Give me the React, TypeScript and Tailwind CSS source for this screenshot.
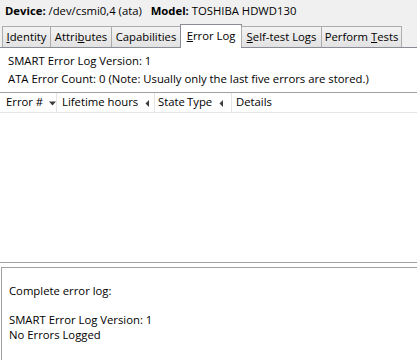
import React from 'react';

const font = { fontFamily: '"Open Sans", "Noto Sans", sans-serif' };

const tabs = [
  { pre: '', u: 'I', post: 'dentity', w: 'w-[49px]' },
  { pre: 'Attri', u: 'b', post: 'utes', w: 'w-[62px]' },
  { pre: 'Capabilities', u: '', post: '', w: 'w-[70px]' },
  { pre: '', u: 'E', post: 'rror Log', w: 'w-[62px]', active: true },
  { pre: '', u: 'S', post: 'elf-test Logs', w: 'w-[81px]' },
  { pre: 'Perform ', u: 'T', post: 'ests', w: 'w-[81px]' },
];

const Arrow = ({ dir }: { dir: 'down' | 'left' }) => (
  <svg width="7" height="7" viewBox="0 0 7 7" className="ml-[6px] mt-px shrink-0">
    {dir === 'down' ? <path d="M0 1.5h7L3.5 5.5z" fill="#3c3c3c" /> : <path d="M5 0v7L1.5 3.5z" fill="#3c3c3c" />}
  </svg>
);

const App: React.FC = () => {
  return (
    <div className="w-[417px] h-[360px] bg-[#f0f0f0] text-[11.3px] text-black overflow-hidden flex flex-col" style={font}>
      {/* Device line */}
      <div className="h-[23px] pl-[5px] pt-[3px] leading-[16px] whitespace-nowrap">
        <span className="font-bold">Device:</span> /dev/csmi0,4 (ata)&nbsp;&nbsp;&nbsp;<span className="font-bold">Model:</span> TOSHIBA HDWD130
      </div>

      {/* Tabs */}
      <div className="flex items-end pl-[2px] h-[24px] relative z-10">
        {tabs.map((t, i) =>
          t.active ? (
            <div key={i} className={`${t.w} h-[24px] -mb-px bg-white border border-b-0 border-[#898c95] pt-[2px] leading-[18px] whitespace-nowrap -ml-px text-center`}>
              {t.pre}<span className="underline">{t.u}</span>{t.post}
            </div>
          ) : (
            <div key={i} className={`${t.w} h-[21px] bg-gradient-to-b from-[#f3f3f3] to-[#e2e2e2] border border-b-0 border-[#acacac] leading-[19px] whitespace-nowrap -ml-px first:ml-0 text-center`}>
              {t.pre}{t.u && <span className="underline">{t.u}</span>}{t.post}
            </div>
          )
        )}
      </div>

      {/* Panel */}
      <div className="flex-1 bg-white border-t border-[#898c95] flex flex-col">
        <div className="pl-[8px] pt-[4px] leading-[18px] whitespace-nowrap">
          <div>SMART Error Log Version: 1</div>
          <div>ATA Error Count: 0 (Note: Usually only the last five errors are stored.)</div>
        </div>

        {/* Error list */}
        <div className="mt-[4px] h-[170px] border-t border-[#a0a0a0] flex flex-col">
          <div className="h-[20px] flex items-center border-b border-[#e5e5e5] whitespace-nowrap">
            <div className="w-[57px] pl-[6px] flex items-center border-r border-[#e5e5e5] h-full">Error #<Arrow dir="down" /></div>
            <div className="w-[98px] pl-[5px] flex items-center border-r border-[#e5e5e5] h-full">Lifetime hours<Arrow dir="left" /></div>
            <div className="w-[31px] pl-[3px] flex items-center h-full shrink-0">State</div>
            <div className="w-[46px] pl-[1px] flex items-center border-r border-[#e5e5e5] h-full">Type<Arrow dir="left" /></div>
            <div className="pl-[4px] flex items-center h-full">Details</div>
          </div>
        </div>

        <div className="h-[5px] border-t border-[#a0a0a0] bg-white" />

        {/* Full log */}
        <div className="flex-1 border-t border-l border-[#a0a0a0] ml-px pl-[7px] pt-[15px] leading-[15px] whitespace-nowrap">
          <div>Complete error log:</div>
          <div className="h-[14px]" />
          <div>SMART Error Log Version: 1</div>
          <div>No Errors Logged</div>
        </div>
      </div>
    </div>
  );
};

export default App;
